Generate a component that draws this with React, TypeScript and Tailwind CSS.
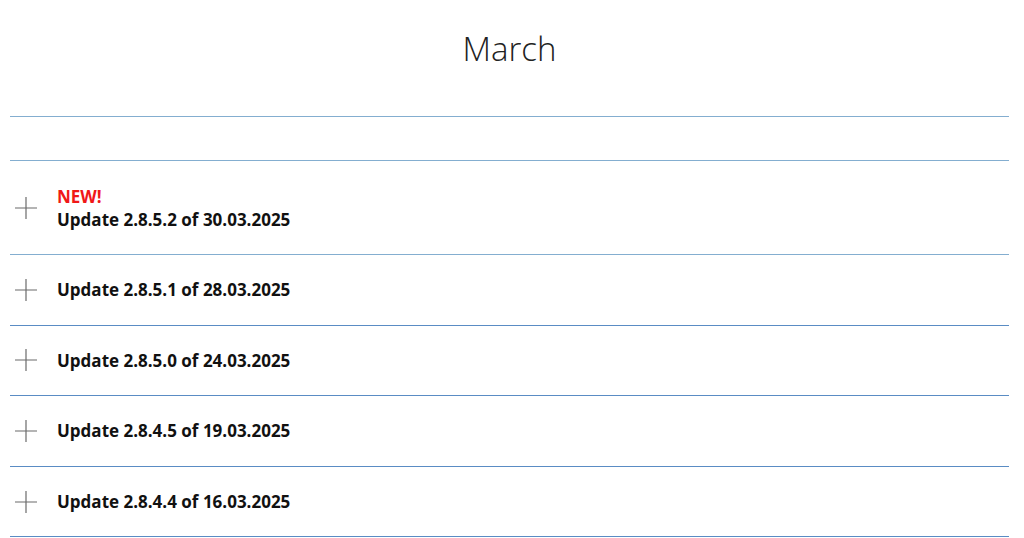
import React from "react";

type Release = {
  version: string;
  date: string;
  isNew?: boolean;
};

const releases: Release[] = [
  { version: "2.8.5.2", date: "30.03.2025", isNew: true },
  { version: "2.8.5.1", date: "28.03.2025" },
  { version: "2.8.5.0", date: "24.03.2025" },
  { version: "2.8.4.5", date: "19.03.2025" },
  { version: "2.8.4.4", date: "16.03.2025" },
];

const PlusIcon = () => (
  <svg width="22" height="22" viewBox="0 0 22 22" className="shrink-0">
    <path d="M11 0v22M0 11h22" stroke="#6b6b6b" strokeWidth="1.2" />
  </svg>
);

export default function App() {
  return (
    <div
      className="min-h-[538px] bg-white pl-[10px] pr-[15px] text-[#111]"
      style={{ fontFamily: '"Open Sans", "Liberation Sans", sans-serif' }}
    >
      <h1 className="h-[116px] pt-[26px] text-center text-[33px] leading-[46px] font-light text-[#222]">
        March
      </h1>
      <div className="h-[45px] border-t border-b border-[#84aed0]" />
      <ul>
        {releases.map((r) => (
          <li
            key={r.version}
            className={`flex items-center gap-[20px] border-b pl-[5px] ${
              r.isNew ? "h-[94px] border-[#84aed0]" : "h-[70.6px] border-[#5a8cc4]"
            }`}
          >
            <PlusIcon />
            <div className="flex flex-col text-[17px] leading-[23px] font-bold">
              {r.isNew && <span className="text-[#f01818]">NEW!</span>}
              <span>
                Update {r.version} of {r.date}
              </span>
            </div>
          </li>
        ))}
      </ul>
    </div>
  );
}
